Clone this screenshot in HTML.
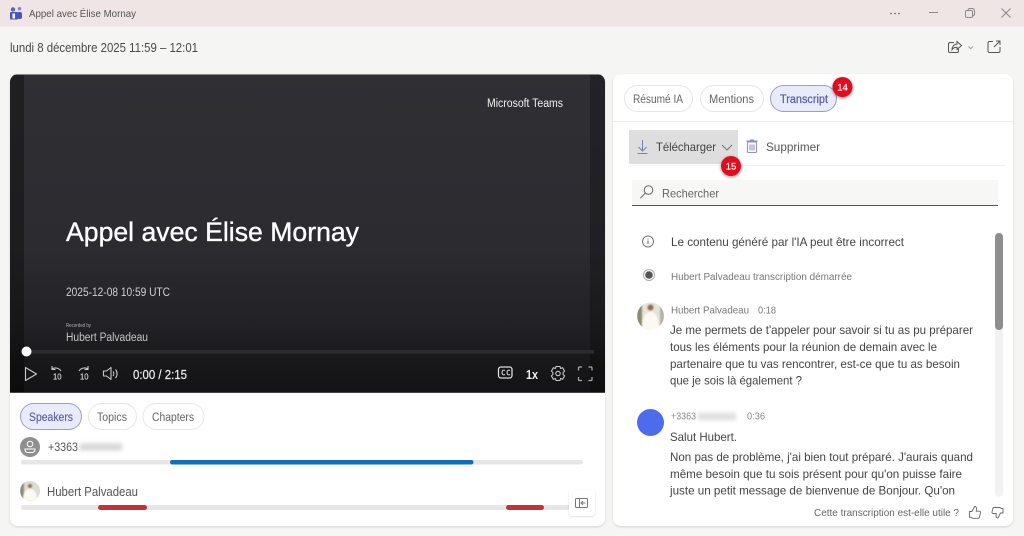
<!DOCTYPE html>
<html lang="fr"><head><meta charset="utf-8"><title>Appel avec Élise Mornay</title>
<style>html,body{margin:0;padding:0;width:1024px;height:536px;overflow:hidden;background:#f5f5f4}
svg{display:block}text{font-family:"Liberation Sans",sans-serif;white-space:pre}</style></head><body>
<svg width="1024" height="536" viewBox="0 0 1024 536" xmlns="http://www.w3.org/2000/svg">
<defs>
<linearGradient id="v" x1="0" y1="0" x2="0" y2="1"><stop offset="0" stop-color="#2f2f34"/><stop offset=".55" stop-color="#2b2b30"/><stop offset=".8" stop-color="#212125"/><stop offset=".9" stop-color="#18181a"/><stop offset="1" stop-color="#131315"/></linearGradient>
<filter id="s" x="-40%" y="-40%" width="180%" height="180%"><feDropShadow dx="0" dy="1" stdDeviation="1.5" flood-color="#000" flood-opacity=".45"/></filter>
<filter id="c" x="-5%" y="-5%" width="110%" height="110%"><feDropShadow dx="0" dy="1" stdDeviation="1" flood-color="#000" flood-opacity=".14"/></filter>
<filter id="b1" x="-20%" y="-80%" width="140%" height="260%"><feGaussianBlur stdDeviation="2"/></filter>
<filter id="t"><feGaussianBlur stdDeviation=".25"/></filter>
<filter id="av"><feGaussianBlur stdDeviation=".7"/></filter>
<clipPath id="vc"><path d="M18 74H597a8 8 0 0 1 8 8V393H10V82a8 8 0 0 1 8-8z"/></clipPath>
<clipPath id="a1"><circle cx="30" cy="491" r="10"/></clipPath>
<clipPath id="a2"><circle cx="650.500" cy="316" r="13.500"/></clipPath>
</defs>
<rect width="1024" height="536" fill="#f5f5f4"/>
<rect width="1024" height="26.500" fill="#efe5e5"/>
<!-- teams logo -->
<g><rect x="10" y="12" width="8" height="7.500" rx="1" fill="#4d55bd"/><circle cx="13" cy="9.500" r="2.200" fill="#5a62c8"/><rect x="17" y="12" width="5" height="7" rx="2" fill="#4b53bc"/><circle cx="19.500" cy="8.700" r="1.700" fill="#7b83eb"/><rect x="12.500" y="13.500" width="2.500" height="5" fill="#fff"/></g>
<g filter="url(#t)">
<text x="29" y="17" font-size="10.500" fill="#555" textLength="107" lengthAdjust="spacingAndGlyphs">Appel avec Élise Mornay</text>
<text x="10" y="52" font-size="12.500" fill="#4a4a4a" textLength="188" lengthAdjust="spacingAndGlyphs">lundi 8 décembre 2025 11:59 – 12:01</text>
</g>
<!-- window controls -->
<g fill="#555"><circle cx="891" cy="13.500" r=".8"/><circle cx="895" cy="13.500" r=".8"/><circle cx="899" cy="13.500" r=".8"/></g>
<path d="M929 12.500h9" stroke="#888" stroke-width="1"/>
<g fill="none" stroke="#888"><rect x="965.500" y="10.500" width="7" height="7" rx="1.500"/><path d="M968 10.500c0-1.500 1-2 2-2h2c1.500 0 2.500 1 2.500 2.500v3c0 1-.5 1.500-1.500 2"/><path d="M1001.500 8.500l9 9m0-9l-9 9" stroke-width="1"/></g>
<!-- share + popout -->
<g fill="none" stroke="#555" stroke-width="1"><path d="M954 42.500h-4a1.500 1.500 0 0 0-1.500 1.500v7a1.500 1.500 0 0 0 1.500 1.500h7a1.500 1.500 0 0 0 1.500-1.500v-2"/><path d="M957 41.500l4.500 4-4.500 4v-2.300c-2.500 0-4 .8-5 2.500 0-3 2-5.500 5-5.700z"/><path d="M968.500 46.500l2.200 2.200 2.200-2.200" stroke="#999"/><path d="M993 41.500h-3.500a1.500 1.500 0 0 0-1.500 1.500v8a1.500 1.500 0 0 0 1.500 1.500h9a1.500 1.500 0 0 0 1.500-1.500v-4"/><path d="M994 47l6-6m-4 0h4v4"/></g>
<!-- left card -->
<rect x="10" y="74" width="595" height="452" rx="8" fill="#fff" filter="url(#c)"/>
<g clip-path="url(#vc)"><rect x="10" y="74" width="595" height="319" fill="url(#v)"/><rect x="10" y="74" width="14" height="319" fill="#000" opacity=".32"/><rect x="590" y="74" width="15" height="319" fill="#000" opacity=".25"/><rect x="10" y="74" width="595" height="1" fill="#8a8a8a"/><rect x="10" y="392" width="595" height="1" fill="#444"/></g>
<g filter="url(#t)">
<text x="487" y="107" font-size="11.500" fill="#f0f0f0" textLength="76" lengthAdjust="spacingAndGlyphs">Microsoft Teams</text>
<text x="66" y="241" font-size="27" fill="#fff" stroke="#fff" stroke-width=".35" textLength="293" lengthAdjust="spacingAndGlyphs">Appel avec Élise Mornay</text>
<text x="66" y="296" font-size="11.500" fill="#d0d0d0" textLength="104" lengthAdjust="spacingAndGlyphs">2025-12-08 10:59 UTC</text>
<text x="66" y="327" font-size="5" fill="#b0b0b0" textLength="25" lengthAdjust="spacingAndGlyphs">Recorded by</text>
<text x="66" y="341" font-size="11.500" fill="#c4c4c4" textLength="82" lengthAdjust="spacingAndGlyphs">Hubert Palvadeau</text>
</g>
<rect x="27" y="350" width="567" height="3.500" fill="#2c2c2e"/>
<circle cx="26.500" cy="351.500" r="5" fill="#fff"/>
<!-- player controls -->
<g fill="none" stroke="#c8c8c8" stroke-width="1.100">
<path d="M25.500 367.500v13l11-6.500z" stroke-linejoin="round"/>
<path d="M52 369a6.500 6.500 0 0 1 9 2M52 366v3.500h3.500"/>
<path d="M88 369a6.500 6.500 0 0 0-9 2M88 366v3.500h-3.500"/>
<path d="M103.500 371h3l4.500-3.500v12l-4.500-3.500h-3z" stroke-linejoin="round"/><path d="M113 371.500a3.500 3.500 0 0 1 0 4.500M115.500 369.500a6.500 6.500 0 0 1 0 8.500"/>
<rect x="498.500" y="367" width="13.500" height="11" rx="2.500" stroke="#ddd" stroke-width="1.300"/>
<path d="M505 370.500c-2-1-3 .3-3 2s1 3 3 2m5-4c-2-1-3 .3-3 2s1 3 3 2" stroke="#ddd" stroke-width="1"/>
<circle cx="558" cy="373.500" r="2.200"/><path d="M556 366.500h4l.6 2 2-.8 2 3.400-1.500 1.400v2l1.500 1.400-2 3.400-2-.8-.6 2h-4l-.6-2-2 .8-2-3.400 1.500-1.400v-2l-1.500-1.400 2-3.400 2 .8z" stroke-linejoin="round"/>
<path d="M578.500 370.500v-2.500a1 1 0 0 1 1-1h2.500M588.500 367h2.500a1 1 0 0 1 1 1v2.500M592 377v2.500a1 1 0 0 1-1 1h-2.500M582 380.500h-2.500a1 1 0 0 1-1-1V377" stroke="#aaa" stroke-width="1.200"/>
</g>
<g filter="url(#t)">
<text x="53" y="379.500" font-size="8" fill="#ccc" stroke="#ccc" stroke-width=".2" textLength="8.500" lengthAdjust="spacingAndGlyphs">10</text>
<text x="80" y="379.500" font-size="8" fill="#ccc" stroke="#ccc" stroke-width=".2" textLength="8.500" lengthAdjust="spacingAndGlyphs">10</text>
<text x="133" y="379" font-size="12.500" fill="#eee" stroke="#eee" stroke-width=".2" textLength="54" lengthAdjust="spacingAndGlyphs">0:00 / 2:15</text>
<text x="526" y="379" font-size="12.500" font-weight="bold" fill="#eee" textLength="12" lengthAdjust="spacingAndGlyphs">1x</text>
</g>
<!-- tabs left -->
<rect x="20.500" y="403.500" width="61" height="26" rx="13" fill="#e8ebfa" stroke="#9a9ec9"/>
<rect x="88.500" y="403.500" width="48" height="26" rx="13" fill="#fff" stroke="#e6e6e6"/>
<rect x="143" y="403.500" width="61" height="26" rx="13" fill="#fff" stroke="#e6e6e6"/>
<g filter="url(#t)">
<text x="29" y="421" font-size="11.500" fill="#5b5fa8" stroke="#5b5fa8" stroke-width=".15" textLength="44" lengthAdjust="spacingAndGlyphs">Speakers</text>
<text x="97" y="421" font-size="11.500" fill="#666" textLength="30" lengthAdjust="spacingAndGlyphs">Topics</text>
<text x="152" y="421" font-size="11.500" fill="#666" textLength="42" lengthAdjust="spacingAndGlyphs">Chapters</text>
</g>
<circle cx="30" cy="447" r="10" fill="#8f8f8f"/>
<g fill="none" stroke="#fff" stroke-width="1"><circle cx="30" cy="444" r="2.800"/><path d="M25 449h10v1a3 3 0 0 1-3 2.500h-4a3 3 0 0 1-3-2.500z"/></g>
<g filter="url(#t)"><text x="48" y="451" font-size="12" fill="#555" textLength="30" lengthAdjust="spacingAndGlyphs">+3363</text></g>
<rect x="80" y="443.500" width="42" height="7" fill="#c4c4c4" filter="url(#b1)" opacity=".7"/>
<rect x="21" y="460" width="562" height="4.500" rx="2.200" fill="#e6e6e6"/>
<rect x="170" y="460" width="303.500" height="4.500" rx="2.200" fill="#106ebe"/>
<g clip-path="url(#a1)"><rect x="20" y="481" width="20" height="20" fill="#dedbd2"/><g filter="url(#av)"><rect x="20" y="481" width="4" height="20" fill="#8f8c78"/><path d="M23 501c0-9 3-12 7-12s7 3 7 12z" fill="#fbf9f2"/><circle cx="30" cy="486" r="2" fill="#8f6d55"/></g></g>
<g filter="url(#t)"><text x="47" y="496" font-size="12.500" fill="#555" textLength="91" lengthAdjust="spacingAndGlyphs">Hubert Palvadeau</text></g>
<rect x="21" y="505" width="550" height="5" rx="2.500" fill="#e6e6e6"/>
<rect x="98" y="505" width="49" height="5" rx="2.500" fill="#c4313a"/>
<rect x="506" y="505" width="38" height="5" rx="2.500" fill="#c4313a"/>
<rect x="569" y="490" width="26" height="26" rx="3" fill="#fff" filter="url(#c)"/>
<g fill="none" stroke="#777" stroke-width="1"><rect x="575.500" y="498.500" width="12" height="9" rx="1"/><path d="M579.500 498.500v9"/><path d="M581 503h4.500M583 501l-2 2 2 2"/></g>
<!-- right card -->
<rect x="613" y="74" width="400" height="452" rx="8" fill="#fff" filter="url(#c)"/>
<rect x="624.500" y="85.500" width="68" height="26" rx="13" fill="#fff" stroke="#e6e6e6"/>
<rect x="700.500" y="85.500" width="63" height="26" rx="13" fill="#fff" stroke="#e6e6e6"/>
<rect x="770.500" y="85.500" width="66" height="26" rx="13" fill="#e8ebfa" stroke="#9a9ec9"/>
<g filter="url(#t)">
<text x="633" y="103" font-size="11.500" fill="#666" textLength="50" lengthAdjust="spacingAndGlyphs">Résumé IA</text>
<text x="709" y="103" font-size="11.500" fill="#666" textLength="45" lengthAdjust="spacingAndGlyphs">Mentions</text>
<text x="780" y="103" font-size="11.500" fill="#5b5fa8" stroke="#5b5fa8" stroke-width=".25" textLength="48" lengthAdjust="spacingAndGlyphs">Transcript</text>
</g>
<rect x="613" y="121" width="400" height="1" fill="#ececec"/>
<rect x="629" y="130" width="109" height="34" fill="#dedede"/>
<rect x="630" y="165" width="376" height="1" fill="#f2f2f2"/>
<g fill="none" stroke="#7a7eb8" stroke-width="1"><path d="M642.500 140v10.500M638.500 147l4 4 4-4M637.500 153.500h10"/></g>
<path d="M722 145l5 5 5-5" fill="none" stroke="#777" stroke-width="1"/>
<g fill="none" stroke="#8a8ec0" stroke-width="1"><rect x="747.500" y="142" width="9" height="10.500" rx="1"/><path d="M747 142v-1h10v1M750 140h4M750 144.500v6M752 144.500v6M754 144.500v6"/></g>
<g filter="url(#t)">
<text x="656" y="151" font-size="12" fill="#444" textLength="60" lengthAdjust="spacingAndGlyphs">Télécharger</text>
<text x="766" y="151" font-size="12" fill="#555" textLength="54" lengthAdjust="spacingAndGlyphs">Supprimer</text>
</g>
<rect x="632" y="180" width="366" height="25" fill="#f7f7f6"/>
<rect x="632" y="205" width="366" height="1" fill="#555"/>
<g fill="none" stroke="#666" stroke-width="1"><circle cx="648.500" cy="190" r="4.300"/><path d="M645.300 193.200l-5 5"/></g>
<g filter="url(#t)">
<text x="662" y="197.500" font-size="12" fill="#666" textLength="57" lengthAdjust="spacingAndGlyphs">Rechercher</text>
<text x="671" y="246" font-size="12" fill="#444" textLength="233" lengthAdjust="spacingAndGlyphs">Le contenu généré par l'IA peut être incorrect</text>
<text x="671" y="280" font-size="10" fill="#777" textLength="181" lengthAdjust="spacingAndGlyphs">Hubert Palvadeau transcription démarrée</text>
<text x="671" y="313.500" font-size="10.500" fill="#777" textLength="78" lengthAdjust="spacingAndGlyphs">Hubert Palvadeau</text>
<text x="758" y="313.500" font-size="10.500" fill="#777" textLength="18" lengthAdjust="spacingAndGlyphs">0:18</text>
<text x="670" y="334" font-size="12" fill="#444" textLength="303" lengthAdjust="spacingAndGlyphs">Je me permets de t'appeler pour savoir si tu as pu préparer</text>
<text x="670" y="351" font-size="12" fill="#444" textLength="267" lengthAdjust="spacingAndGlyphs">tous les éléments pour la réunion de demain avec le</text>
<text x="670" y="368" font-size="12" fill="#444" textLength="290" lengthAdjust="spacingAndGlyphs">partenaire que tu vas rencontrer, est-ce que tu as besoin</text>
<text x="670" y="384.500" font-size="12" fill="#444" textLength="132" lengthAdjust="spacingAndGlyphs">que je sois là également ?</text>
<text x="671" y="419.500" font-size="10.500" fill="#888" textLength="25" lengthAdjust="spacingAndGlyphs">+3363</text>
<text x="747" y="419.500" font-size="10.500" fill="#888" textLength="18" lengthAdjust="spacingAndGlyphs">0:36</text>
<text x="670" y="441" font-size="12" fill="#444" textLength="67" lengthAdjust="spacingAndGlyphs">Salut Hubert.</text>
<text x="670" y="461" font-size="12" fill="#444" textLength="303" lengthAdjust="spacingAndGlyphs">Non pas de problème, j'ai bien tout préparé. J'aurais quand</text>
<text x="670" y="478" font-size="12" fill="#444" textLength="292" lengthAdjust="spacingAndGlyphs">même besoin que tu sois présent pour qu'on puisse faire</text>
<text x="670" y="494.500" font-size="12" fill="#444" textLength="285" lengthAdjust="spacingAndGlyphs">juste un petit message de bienvenue de Bonjour. Qu'on</text>
<text x="814" y="516" font-size="10.500" fill="#666" textLength="145" lengthAdjust="spacingAndGlyphs">Cette transcription est-elle utile ?</text>
</g>
<circle cx="648" cy="241.500" r="5.500" fill="none" stroke="#777"/><path d="M648 240.500v3.500M648 238.500v1" stroke="#666"/>
<circle cx="649" cy="275" r="5.500" fill="#fff" stroke="#aaa"/><circle cx="649" cy="275" r="3.800" fill="#555"/>
<rect x="995" y="233" width="8" height="264" rx="4" fill="#f2f2f2"/>
<rect x="995" y="233" width="8" height="97" rx="4" fill="#8e8e8e"/>
<g clip-path="url(#a2)"><rect x="637" y="302" width="27" height="28" fill="#e6e3da"/><g filter="url(#av)"><rect x="637" y="302" width="5" height="28" fill="#8e8a72"/><rect x="660" y="302" width="4" height="28" fill="#b5b2a2"/><path d="M642 330c0-12 3-18 8.500-18s8.500 6 8.500 18z" fill="#fbf9f2"/><circle cx="650.500" cy="307.500" r="3" fill="#8f6d55"/></g></g>
<circle cx="650.500" cy="422.500" r="13.500" fill="#4f6bed"/>
<rect x="698" y="413" width="38" height="7" fill="#cfcfcf" filter="url(#b1)" opacity=".7"/>
<g fill="none" stroke="#666" stroke-width=".9" stroke-linejoin="round"><path d="M972 511.500l2.500-5c1.300 0 2 .8 2 2l-.3 2.700h3c1 0 1.500.8 1.300 1.600l-1 4.200c-.2.800-.8 1.300-1.600 1.300h-4.400c-1 0-1.800-.4-2.500-1h-1.500v-5.800z"/><path d="M1000.500 513l-2.500 5c-1.300 0-2-.8-2-2l.3-2.500h-3c-1 0-1.500-.8-1.300-1.600l.8-3.200c.2-.8.800-1.200 1.600-1.200h4.600c1 0 1.800.4 2.500 1h1.500v4.500z"/></g>
<!-- badges -->
<g filter="url(#s)"><circle cx="842.500" cy="87" r="10" fill="#e0101c"/><circle cx="731" cy="166" r="10" fill="#e0101c"/></g>
<text x="842.500" y="90.500" font-size="9.500" fill="#fff" stroke="#fff" stroke-width=".2" text-anchor="middle">14</text>
<text x="731" y="169.500" font-size="9.500" fill="#fff" stroke="#fff" stroke-width=".2" text-anchor="middle">15</text>
</svg>
</body></html>
